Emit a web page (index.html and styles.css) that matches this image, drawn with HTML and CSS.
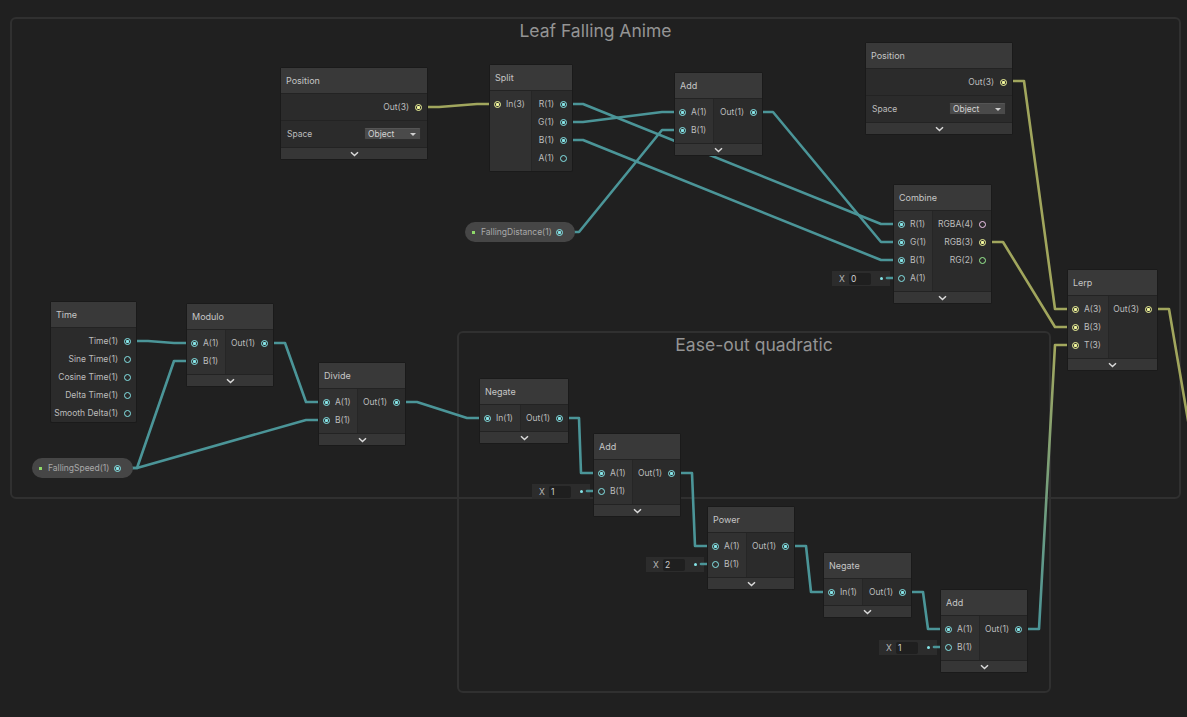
FILE: index.html
```html
<!DOCTYPE html>
<html>
<head>
<meta charset="utf-8">
<title>Shader Graph</title>
<link rel="stylesheet" href="styles.css">
</head>
<body>
<div class="canvas">
  <div class="group g1"><div class="gtitle">Leaf Falling Anime</div></div>
  <div class="group g2"><div class="gtitle">Ease-out quadratic</div></div>

  <div class="dv dv-comb"><span class="dv-x">X</span><span class="dv-field">0</span><span class="dv-dot"></span></div>
  <div class="dv dv-add2"><span class="dv-x">X</span><span class="dv-field">1</span><span class="dv-dot"></span></div>
  <div class="dv dv-pow"><span class="dv-x">X</span><span class="dv-field">2</span><span class="dv-dot"></span></div>
  <div class="dv dv-add3"><span class="dv-x">X</span><span class="dv-field">1</span><span class="dv-dot"></span></div>

  <svg class="wires" width="1187" height="717" viewBox="0 0 1187 717">
    <defs>
      <linearGradient id="gT" gradientUnits="userSpaceOnUse" x1="0" y1="629" x2="0" y2="345">
        <stop offset="0" stop-color="#4b9598"/>
        <stop offset="1" stop-color="#a3a85e"/>
      </linearGradient>
    </defs>
    <g class="w-y">
      <polyline points="419,107 439,107 477,104 497,104"/>
      <polyline points="1004,81 1024,81 1055,309 1075,309"/>
      <polyline points="983,242 1003,242 1055,327 1075,327"/>
      <polyline points="1149,309 1169,309 1190,432"/>
    </g>
    <g class="w-t">
      <polyline points="563,104 583,104 881,224 901,224"/>
      <polyline points="563,122 583,122 662,112 682,112"/>
      <polyline points="563,140 583,140 881,260 901,260"/>
      <polyline points="559,232 579,232 662,130 682,130"/>
      <polyline points="753,112 773,112 881,242 901,242"/>
      <polyline points="887,278 901,278"/>
      <polyline points="128,341 148,341 174,343 194,343"/>
      <polyline points="117,468 137,468 174,361 194,361"/>
      <polyline points="117,468 137,468 306,420 326,420"/>
      <polyline points="265,343 285,343 306,402 326,402"/>
      <polyline points="397,402 417,402 467,418 487,418"/>
      <polyline points="559,418 579,418 581,473 601,473"/>
      <polyline points="587,491 601,491"/>
      <polyline points="672,473 692,473 695,546 715,546"/>
      <polyline points="701,564 715,564"/>
      <polyline points="786,546 806,546 811,592 831,592"/>
      <polyline points="903,592 923,592 928,629 948,629"/>
      <polyline points="934,647 948,647"/>
    </g>
    <polyline class="w-g" points="1019,629 1039,629 1055,345 1075,345"/>
  </svg>

  <!-- Position (top left) -->
  <div class="node n-pos1">
    <div class="hdr">Position</div>
    <div class="prow out"><span>Out(3)</span><span class="port v3 on"></span></div>
    <div class="prow ctl"><span>Space</span><div class="dd"><span>Object</span><span class="tri"></span></div></div>
    <div class="ftr"><svg width="9" height="6" viewBox="0 0 9 6"><path d="M1 1.2l3.5 3.3L8 1.2"/></svg></div>
  </div>

  <!-- Split -->
  <div class="node n-split">
    <div class="hdr">Split</div>
    <div class="body">
      <div class="ins w42">
        <div class="row"><span class="port v3 on"></span><span>In(3)</span></div>
      </div>
      <div class="outs">
        <div class="row"><span>R(1)</span><span class="port f1 on"></span></div>
        <div class="row"><span>G(1)</span><span class="port f1 on"></span></div>
        <div class="row"><span>B(1)</span><span class="port f1 on"></span></div>
        <div class="row"><span>A(1)</span><span class="port f1"></span></div>
      </div>
    </div>
  </div>

  <!-- Add (top) -->
  <div class="node n-add1">
    <div class="hdr">Add</div>
    <div class="body">
      <div class="ins">
        <div class="row"><span class="port f1 on"></span><span>A(1)</span></div>
        <div class="row"><span class="port f1 on"></span><span>B(1)</span></div>
      </div>
      <div class="outs">
        <div class="row"><span>Out(1)</span><span class="port f1 on"></span></div>
      </div>
    </div>
    <div class="ftr"><svg width="9" height="6" viewBox="0 0 9 6"><path d="M1 1.2l3.5 3.3L8 1.2"/></svg></div>
  </div>

  <!-- FallingDistance -->
  <div class="pill p-dist"><span class="pdot"></span><span class="ptxt">FallingDistance(1)</span><span class="port f1 on"></span></div>

  <!-- Position (top right) -->
  <div class="node n-pos2">
    <div class="hdr">Position</div>
    <div class="prow out"><span>Out(3)</span><span class="port v3 on"></span></div>
    <div class="prow ctl"><span>Space</span><div class="dd"><span>Object</span><span class="tri"></span></div></div>
    <div class="ftr"><svg width="9" height="6" viewBox="0 0 9 6"><path d="M1 1.2l3.5 3.3L8 1.2"/></svg></div>
  </div>

  <!-- Combine -->
  <div class="node n-comb">
    <div class="hdr">Combine</div>
    <div class="body">
      <div class="ins">
        <div class="row"><span class="port f1 on"></span><span>R(1)</span></div>
        <div class="row"><span class="port f1 on"></span><span>G(1)</span></div>
        <div class="row"><span class="port f1 on"></span><span>B(1)</span></div>
        <div class="row"><span class="port f1"></span><span>A(1)</span></div>
      </div>
      <div class="outs">
        <div class="row"><span>RGBA(4)</span><span class="port v4"></span></div>
        <div class="row"><span>RGB(3)</span><span class="port v3 on"></span></div>
        <div class="row"><span>RG(2)</span><span class="port v2"></span></div>
      </div>
    </div>
    <div class="ftr"><svg width="9" height="6" viewBox="0 0 9 6"><path d="M1 1.2l3.5 3.3L8 1.2"/></svg></div>
  </div>

  <!-- Lerp -->
  <div class="node n-lerp">
    <div class="hdr">Lerp</div>
    <div class="body">
      <div class="ins w41">
        <div class="row"><span class="port v3 on"></span><span>A(3)</span></div>
        <div class="row"><span class="port v3 on"></span><span>B(3)</span></div>
        <div class="row"><span class="port v3 on"></span><span>T(3)</span></div>
      </div>
      <div class="outs">
        <div class="row"><span>Out(3)</span><span class="port v3 on"></span></div>
      </div>
    </div>
    <div class="ftr"><svg width="9" height="6" viewBox="0 0 9 6"><path d="M1 1.2l3.5 3.3L8 1.2"/></svg></div>
  </div>

  <!-- Time -->
  <div class="node n-time">
    <div class="hdr">Time</div>
    <div class="body">
      <div class="outs tight">
        <div class="row"><span>Time(1)</span><span class="port f1 on"></span></div>
        <div class="row"><span>Sine Time(1)</span><span class="port f1"></span></div>
        <div class="row"><span>Cosine Time(1)</span><span class="port f1"></span></div>
        <div class="row"><span>Delta Time(1)</span><span class="port f1"></span></div>
        <div class="row"><span>Smooth Delta(1)</span><span class="port f1"></span></div>
      </div>
    </div>
  </div>

  <!-- Modulo -->
  <div class="node n-mod">
    <div class="hdr">Modulo</div>
    <div class="body">
      <div class="ins">
        <div class="row"><span class="port f1 on"></span><span>A(1)</span></div>
        <div class="row"><span class="port f1 on"></span><span>B(1)</span></div>
      </div>
      <div class="outs">
        <div class="row"><span>Out(1)</span><span class="port f1 on"></span></div>
      </div>
    </div>
    <div class="ftr"><svg width="9" height="6" viewBox="0 0 9 6"><path d="M1 1.2l3.5 3.3L8 1.2"/></svg></div>
  </div>

  <!-- Divide -->
  <div class="node n-div">
    <div class="hdr">Divide</div>
    <div class="body">
      <div class="ins">
        <div class="row"><span class="port f1 on"></span><span>A(1)</span></div>
        <div class="row"><span class="port f1 on"></span><span>B(1)</span></div>
      </div>
      <div class="outs">
        <div class="row"><span>Out(1)</span><span class="port f1 on"></span></div>
      </div>
    </div>
    <div class="ftr"><svg width="9" height="6" viewBox="0 0 9 6"><path d="M1 1.2l3.5 3.3L8 1.2"/></svg></div>
  </div>

  <!-- FallingSpeed -->
  <div class="pill p-speed"><span class="pdot"></span><span class="ptxt">FallingSpeed(1)</span><span class="port f1 on"></span></div>

  <!-- Negate 1 -->
  <div class="node n-neg1">
    <div class="hdr">Negate</div>
    <div class="body">
      <div class="ins w41">
        <div class="row"><span class="port f1 on"></span><span>In(1)</span></div>
      </div>
      <div class="outs">
        <div class="row"><span>Out(1)</span><span class="port f1 on"></span></div>
      </div>
    </div>
    <div class="ftr"><svg width="9" height="6" viewBox="0 0 9 6"><path d="M1 1.2l3.5 3.3L8 1.2"/></svg></div>
  </div>

  <!-- Add 2 -->
  <div class="node n-add2">
    <div class="hdr">Add</div>
    <div class="body">
      <div class="ins">
        <div class="row"><span class="port f1 on"></span><span>A(1)</span></div>
        <div class="row"><span class="port f1"></span><span>B(1)</span></div>
      </div>
      <div class="outs">
        <div class="row"><span>Out(1)</span><span class="port f1 on"></span></div>
      </div>
    </div>
    <div class="ftr"><svg width="9" height="6" viewBox="0 0 9 6"><path d="M1 1.2l3.5 3.3L8 1.2"/></svg></div>
  </div>

  <!-- Power -->
  <div class="node n-pow">
    <div class="hdr">Power</div>
    <div class="body">
      <div class="ins">
        <div class="row"><span class="port f1 on"></span><span>A(1)</span></div>
        <div class="row"><span class="port f1"></span><span>B(1)</span></div>
      </div>
      <div class="outs">
        <div class="row"><span>Out(1)</span><span class="port f1 on"></span></div>
      </div>
    </div>
    <div class="ftr"><svg width="9" height="6" viewBox="0 0 9 6"><path d="M1 1.2l3.5 3.3L8 1.2"/></svg></div>
  </div>

  <!-- Negate 2 -->
  <div class="node n-neg2">
    <div class="hdr">Negate</div>
    <div class="body">
      <div class="ins">
        <div class="row"><span class="port f1 on"></span><span>In(1)</span></div>
      </div>
      <div class="outs">
        <div class="row"><span>Out(1)</span><span class="port f1 on"></span></div>
      </div>
    </div>
    <div class="ftr"><svg width="9" height="6" viewBox="0 0 9 6"><path d="M1 1.2l3.5 3.3L8 1.2"/></svg></div>
  </div>

  <!-- Add 3 -->
  <div class="node n-add3">
    <div class="hdr">Add</div>
    <div class="body">
      <div class="ins">
        <div class="row"><span class="port f1 on"></span><span>A(1)</span></div>
        <div class="row"><span class="port f1"></span><span>B(1)</span></div>
      </div>
      <div class="outs">
        <div class="row"><span>Out(1)</span><span class="port f1 on"></span></div>
      </div>
    </div>
    <div class="ftr"><svg width="9" height="6" viewBox="0 0 9 6"><path d="M1 1.2l3.5 3.3L8 1.2"/></svg></div>
  </div>
</div>
</body>
</html>
```
FILE: styles.css
```css
html, body {
  margin: 0;
  padding: 0;
  background: #202020;
  overflow: hidden;
}
body {
  font-family: Inter, "Noto Sans", "DejaVu Sans", sans-serif;
}
.canvas {
  position: relative;
  width: 1187px;
  height: 717px;
  overflow: hidden;
  background: #202020;
}

/* groups */
.group {
  position: absolute;
  box-sizing: border-box;
  border: 2px solid #303030;
  border-radius: 6px;
}
.g1 { left: 10px; top: 17px; width: 1171px; height: 482px; }
.g2 { left: 457px; top: 331px; width: 594px; height: 362px; }
.gtitle {
  text-align: center;
  font-size: 17.5px;
  line-height: 20px;
  margin-top: 2px;
  color: #949494;
}

/* wires */
.wires {
  position: absolute;
  left: 0;
  top: 0;
}
.wires polyline {
  fill: none;
  stroke-width: 2.6;
  stroke-linejoin: round;
  stroke-linecap: round;
}
.w-t polyline { stroke: #4b9598; }
.w-y polyline { stroke: #a1a65d; }
.w-g { stroke: url(#gT); }

/* nodes */
.node {
  position: absolute;
  box-sizing: border-box;
  background: #2b2b2b;
  border: 1px solid #1a1a1a;
  border-radius: 2px;
  display: flex;
  flex-direction: column;
  color: #bdbdbd;
  font-size: 8.5px;
}
.hdr {
  height: 25px;
  flex: none;
  background: #393939;
  border-bottom: 1px solid #232323;
  display: flex;
  align-items: center;
  padding-left: 5px;
  font-size: 9px;
  color: #c6c6c6;
}
.body {
  display: flex;
  align-items: stretch;
}
.ins {
  width: 39px;
  flex: none;
  box-sizing: border-box;
  background: #313131;
  padding: 4px 0 4px;
  border-right: 1px solid #262626;
}
.ins.w41 { width: 41px; }
.ins.w42 { width: 42px; }
.outs {
  flex: 1;
  padding: 4px 0 4px;
}
.outs.tight { padding-bottom: 0; }
.row {
  height: 18px;
  display: flex;
  align-items: center;
  white-space: nowrap;
}
.ins .row {
  padding-left: 4px;
  gap: 5px;
}
.outs .row {
  justify-content: flex-end;
  padding-right: 5px;
  gap: 6px;
}
.ftr {
  height: 11px;
  flex: none;
  background: #363636;
  border-top: 1px solid #232323;
  display: flex;
  align-items: center;
  justify-content: center;
}
.ftr svg path {
  fill: none;
  stroke: #dadada;
  stroke-width: 1.5;
}

/* property rows (Position node) */
.prow {
  height: 26px;
  flex: none;
  display: flex;
  align-items: center;
  padding: 0 6px;
  box-sizing: border-box;
}
.prow + .prow { border-top: 1px solid #232323; height: 27px; }
.prow.out { justify-content: flex-end; gap: 6px; padding-right: 5px; }
.prow.ctl { justify-content: space-between; }
.dd {
  width: 57px;
  height: 12px;
  box-sizing: border-box;
  background: #4a4a4a;
  border: 1px solid #2c2c2c;
  border-top-color: #555;
  border-radius: 2px;
  display: flex;
  align-items: center;
  justify-content: space-between;
  padding: 0 4px 0 3px;
  color: #d4d4d4;
  font-size: 8.5px;
}
.tri {
  width: 0;
  height: 0;
  border-left: 3px solid transparent;
  border-right: 3px solid transparent;
  border-top: 3.5px solid #cfcfcf;
}

/* ports */
.port {
  width: 7px;
  height: 7px;
  flex: none;
  box-sizing: border-box;
  border-radius: 50%;
  border: 1.5px solid var(--pc);
}
.port.on {
  background: radial-gradient(circle, var(--pc) 0 1.3px, rgba(0,0,0,0) 1.9px);
}
.f1 { --pc: #84e4e7; }
.v3 { --pc: #f2f79a; }
.v4 { --pc: #f3c8ef; }
.v2 { --pc: #9aef92; }

/* node placement on the canvas */
.n-pos1  { left: 280px;  top: 67px;  width: 148px; }
.n-split { left: 489px;  top: 64px;  width: 84px; }
.n-add1  { left: 674px;  top: 72px;  width: 89px; }
.n-pos2  { left: 865px;  top: 42px;  width: 148px; }
.n-comb  { left: 893px;  top: 184px; width: 99px; }
.n-lerp  { left: 1067px; top: 269px; width: 91px; }
.n-time  { left: 50px;   top: 301px; width: 87px; }
.n-mod   { left: 186px;  top: 303px; width: 88px; }
.n-div   { left: 318px;  top: 362px; width: 88px; }
.n-neg1  { left: 479px;  top: 378px; width: 90px; }
.n-add2  { left: 593px;  top: 433px; width: 88px; }
.n-pow   { left: 707px;  top: 506px; width: 88px; }
.n-neg2  { left: 823px;  top: 552px; width: 89px; }
.n-add3  { left: 940px;  top: 589px; width: 88px; }

/* property pills */
.pill {
  position: absolute;
  box-sizing: border-box;
  height: 20px;
  border-radius: 10px;
  background: #464646;
  display: flex;
  align-items: center;
  padding: 0 12px 0 7px;
  font-size: 8.5px;
  color: #a9a9a9;
}
.pdot {
  width: 3px;
  height: 3px;
  background: #8fd96a;
  flex: none;
}
.ptxt { margin-left: 6px; white-space: nowrap; }
.pill .port { margin-left: auto; }
.p-dist  { left: 465px; top: 222px; width: 110px; }
.p-speed { left: 32px;  top: 458px; width: 101px; }

/* inline default values */
.dv {
  position: absolute;
  box-sizing: border-box;
  width: 58px;
  height: 15px;
  background: #2c2c2c;
  display: flex;
  align-items: center;
  padding: 0 5px 0 7px;
  font-size: 8.5px;
  color: #b8b8b8;
}
.dv-x { width: 10px; flex: none; }
.dv-field {
  width: 22px;
  height: 12px;
  box-sizing: border-box;
  background: #1f1f1f;
  border-radius: 2px;
  padding-left: 2px;
  line-height: 12px;
  color: #cfcfcf;
  flex: none;
}
.dv-dot {
  width: 3.5px;
  height: 3.5px;
  border-radius: 50%;
  background: #84e4e7;
  margin-left: auto;
  margin-right: 2px;
}
.dv-comb { left: 832px; top: 271px; }
.dv-add2 { left: 532px; top: 484px; }
.dv-pow  { left: 646px; top: 557px; }
.dv-add3 { left: 879px; top: 640px; }
```
